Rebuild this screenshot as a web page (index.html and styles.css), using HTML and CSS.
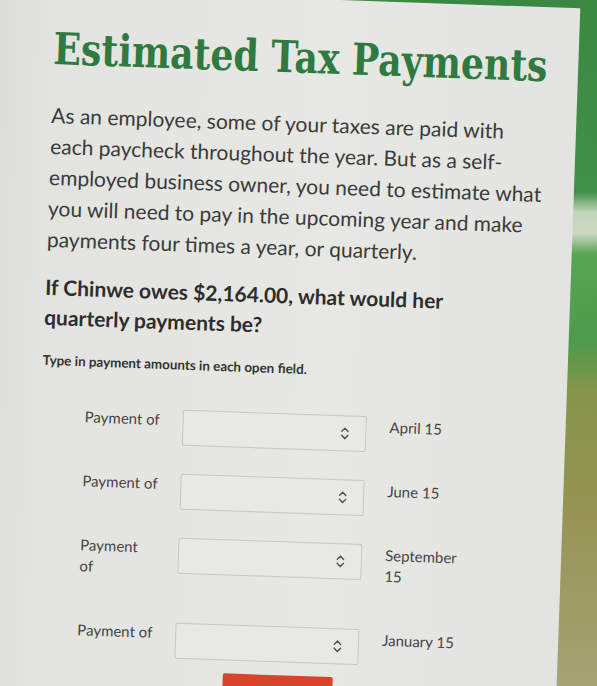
FILE: index.html
```html
<!DOCTYPE html>
<html>
<head>
<meta charset="utf-8">
<link rel="stylesheet" href="styles.css">
</head>
<body>
<main class="card">
  <h1 class="title"><span class="title-text">Estimated Tax Payments</span></h1>
  <p class="intro">As an employee, some of your taxes are paid with each paycheck throughout the year. But as a self-employed business owner, you need to estimate what you will need to pay in the upcoming year and make payments four times a year, or quarterly.</p>
  <p class="question">If Chinwe owes $2,164.00, what would her quarterly payments be?</p>
  <p class="hint">Type in payment amounts in each open field.</p>
  <div class="rows">
    <div class="row">
      <span class="label">Payment of</span>
      <span class="field"><svg class="spin" width="9" height="16" viewBox="0 0 9 16"><path d="M1.4 6 L4.5 2.8 L7.6 6 M1.4 10 L4.5 13.2 L7.6 10" fill="none" stroke="#555" stroke-width="1.5" stroke-linecap="round" stroke-linejoin="round"/></svg></span>
      <span class="date">April 15</span>
    </div>
    <div class="row">
      <span class="label">Payment of</span>
      <span class="field"><svg class="spin" width="9" height="16" viewBox="0 0 9 16"><path d="M1.4 6 L4.5 2.8 L7.6 6 M1.4 10 L4.5 13.2 L7.6 10" fill="none" stroke="#555" stroke-width="1.5" stroke-linecap="round" stroke-linejoin="round"/></svg></span>
      <span class="date">June 15</span>
    </div>
    <div class="row">
      <span class="label narrow">Payment of</span>
      <span class="field"><svg class="spin" width="9" height="16" viewBox="0 0 9 16"><path d="M1.4 6 L4.5 2.8 L7.6 6 M1.4 10 L4.5 13.2 L7.6 10" fill="none" stroke="#555" stroke-width="1.5" stroke-linecap="round" stroke-linejoin="round"/></svg></span>
      <span class="date">September 15</span>
    </div>
    <div class="row last">
      <span class="label">Payment of</span>
      <span class="field"><svg class="spin" width="9" height="16" viewBox="0 0 9 16"><path d="M1.4 6 L4.5 2.8 L7.6 6 M1.4 10 L4.5 13.2 L7.6 10" fill="none" stroke="#555" stroke-width="1.5" stroke-linecap="round" stroke-linejoin="round"/></svg></span>
      <span class="date">January 15</span>
    </div>
  </div>
  <div class="submit"></div>
</main>
</body>
</html>
```
FILE: styles.css
```css
html, body {
  margin: 0;
  padding: 0;
}
body {
  width: 597px;
  height: 686px;
  overflow: hidden;
  background: linear-gradient(180deg, #3a8842 0%, #42904a 28%, #c4d5bc 31%, #cdd8c4 34%, #58a556 37%, #4f9a4c 50%, #86954a 57%, #979455 75%, #a4a476 100%);
  font-family: "Lato", "Liberation Sans", sans-serif;
}
.card {
  box-sizing: border-box;
  width: 600px;
  height: 730px;
  margin: -10px 0 0 -22px;
  padding: 0 0 0 75px;
  overflow: hidden;
  background: linear-gradient(90deg, #d9d9d5 0%, #e3e3e0 12%, #e7e7e4 60%, #e3e3e0 100%);
  transform: rotate(2deg);
  transform-origin: 75px 75px;
}
.title {
  margin: 0;
  padding-top: 29px;
  font-family: "DejaVu Serif", serif;
  font-stretch: condensed;
  font-weight: bold;
  font-size: 44px;
  line-height: 60px;
  color: #2e7a40;
  white-space: nowrap;
}
.title-text {
  display: inline-block;
  transform: scaleX(0.915);
  transform-origin: left center;
}
.intro {
  margin: 20px 0 0;
  width: 500px;
  font-size: 21px;
  line-height: 31px;
  color: #3a3a3a;
}
.question {
  margin: 17.5px 0 0;
  width: 430px;
  font-weight: bold;
  font-size: 21px;
  line-height: 30px;
  color: #2d2d2d;
}
.hint {
  margin: 19px 0 0;
  font-weight: bold;
  font-size: 13.4px;
  line-height: 18px;
  color: #333;
}
.rows {
  margin-top: 36px;
  padding-left: 44px;
  display: flex;
  flex-direction: column;
  gap: 28px;
}
.row {
  display: flex;
  align-items: flex-start;
  font-size: 15px;
  line-height: 21px;
  color: #444;
}
.row.last {
  margin-top: 15px;
}
.label {
  width: 98px;
  flex: none;
}
.label.narrow {
  width: 62px;
  margin-right: 36px;
}
.field {
  flex: none;
  width: 184px;
  height: 36px;
  border: 1px solid #c6c6c2;
  border-radius: 2px;
  background: #e8e8e5;
  display: flex;
  align-items: center;
  justify-content: flex-end;
  box-sizing: border-box;
  padding-right: 16px;
}
.spin {
  display: block;
}
.date {
  margin-left: 23px;
  width: 80px;
}
.submit {
  margin: 13px 0 0 191px;
  width: 110px;
  height: 40px;
  background: #d9432c;
  border-radius: 2px;
}
```
